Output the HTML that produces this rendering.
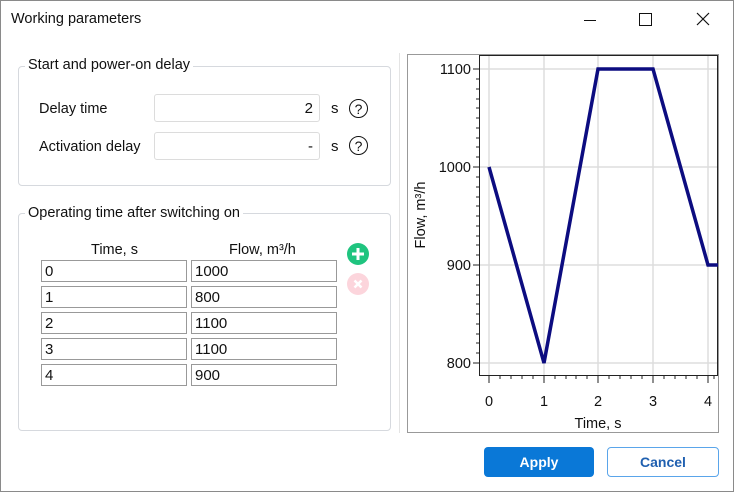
<html><head><style>
body{margin:0;width:734px;height:492px;overflow:hidden;font-family:"Liberation Sans",sans-serif;font-size:14px;color:#111;background:#fff}
.win{position:absolute;left:0;top:0;width:732px;height:490px;border:1px solid #8a8a8a;background:#fff}
.a{position:absolute}
.grp{position:absolute;border:1px solid #d6d9de;border-radius:4px}
.gt{position:absolute;background:#fff;padding:0 3px;font-size:14px}
.inp{position:absolute;border:1px solid #dcdcdc;border-radius:3px;background:#fff;box-sizing:border-box;text-align:right;padding-right:6px;line-height:27px;font-size:15px}
.cell{position:absolute;border:1px solid #999;box-sizing:border-box;height:22px;line-height:21px;padding-left:3px;font-size:15px}
.q{position:absolute;width:17px;height:17px;border:1.6px solid #111;border-radius:50%;text-align:center;font-size:14px;line-height:18px}
</style></head><body><div class="win">
<div class="a" style="left:10px;top:10px;font-size:14.5px">Working parameters</div>
<div class="a" style="left:583px;top:19px;width:12px;height:1px;background:#111"></div>
<div class="a" style="left:638px;top:12px;width:11px;height:11px;border:1px solid #111"></div>
<svg class="a" style="left:695px;top:11px" width="14" height="14"><path d="M1 1L13 13M13 1L1 13" stroke="#111" stroke-width="1.2"/></svg>
<div class="a" style="left:398px;top:52px;width:1px;height:380px;background:#e4e4e4"></div>

<div class="grp" style="left:17px;top:65px;width:371px;height:118px"></div>
<div class="gt" style="left:24px;top:56px;font-size:14.5px">Start and power-on delay</div>
<div class="a" style="left:38px;top:100px;font-size:14.5px">Delay time</div>
<div class="inp" style="left:153px;top:93px;width:166px;height:28px">2</div>
<div class="a" style="left:330px;top:99px;font-size:15px">s</div>
<div class="q" style="left:348px;top:98px">?</div>
<div class="a" style="left:38px;top:138px;font-size:14.5px">Activation delay</div>
<div class="inp" style="left:153px;top:131px;width:166px;height:28px">-</div>
<div class="a" style="left:330px;top:137px;font-size:15px">s</div>
<div class="q" style="left:348px;top:135px">?</div>

<div class="grp" style="left:17px;top:212px;width:371px;height:216px"></div>
<div class="gt" style="left:24px;top:204px;font-size:14.5px">Operating time after switching on</div>
<div class="a" style="left:90px;top:241px;font-size:14.5px">Time, s</div>
<div class="a" style="left:228px;top:241px;font-size:14.5px">Flow, m³/h</div>
<div class="cell" style="left:40px;top:259px;width:146px">0</div><div class="cell" style="left:190px;top:259px;width:146px">1000</div>
<div class="cell" style="left:40px;top:285px;width:146px">1</div><div class="cell" style="left:190px;top:285px;width:146px">800</div>
<div class="cell" style="left:40px;top:311px;width:146px">2</div><div class="cell" style="left:190px;top:311px;width:146px">1100</div>
<div class="cell" style="left:40px;top:337px;width:146px">3</div><div class="cell" style="left:190px;top:337px;width:146px">1100</div>
<div class="cell" style="left:40px;top:363px;width:146px">4</div><div class="cell" style="left:190px;top:363px;width:146px">900</div>
<svg class="a" style="left:345px;top:241px" width="26" height="54"><circle cx="12" cy="12" r="11" fill="#1fc47f"/><path d="M12 6V18M6 12H18" stroke="#fff" stroke-width="3"/><circle cx="12" cy="42" r="11" fill="#fcd5dc"/><path d="M8.5 38.5L15.5 45.5M15.5 38.5L8.5 45.5" stroke="#fff" stroke-width="2.5"/></svg>

<svg class="a" style="left:0;top:0" width="734" height="492" font-family="Liberation Sans" font-size="14">
<rect x="406.5" y="53.5" width="311" height="378" fill="none" stroke="#333" stroke-dasharray="1,1"/>
<g stroke="#ddd" stroke-width="1.5">
<line x1="488" y1="54" x2="488" y2="374"/><line x1="543" y1="54" x2="543" y2="374"/><line x1="597" y1="54" x2="597" y2="374"/><line x1="652" y1="54" x2="652" y2="374"/><line x1="707" y1="54" x2="707" y2="374"/>
<line x1="478" y1="68" x2="717" y2="68"/><line x1="478" y1="166" x2="717" y2="166"/><line x1="478" y1="264" x2="717" y2="264"/><line x1="478" y1="362" x2="717" y2="362"/>
</g>
<rect x="478.5" y="54.5" width="238" height="320" fill="none" stroke="#222"/>
<g stroke="#222">
<path d="M472 68H478M472 166H478M472 264H478M472 362H478"/>
<path d="M475 78H478M475 88H478M475 98H478M475 107H478M475 117H478M475 127H478M475 137H478M475 146H478M475 156H478M475 176H478M475 186H478M475 196H478M475 205H478M475 215H478M475 225H478M475 235H478M475 244H478M475 254H478M475 274H478M475 284H478M475 294H478M475 303H478M475 313H478M475 323H478M475 333H478M475 342H478M475 352H478"/>
<path d="M488 374V382M543 374V382M597 374V382M652 374V382M707 374V382"/>
<path d="M499 374V378M510 374V378M521 374V378M532 374V378M554 374V378M565 374V378M575 374V378M586 374V378M608 374V378M619 374V378M630 374V378M641 374V378M663 374V378M674 374V378M685 374V378M696 374V378M713 374V378"/>
</g>
<g fill="#111" text-anchor="end" font-size="14.5"><text x="470" y="73">1100</text><text x="470" y="171">1000</text><text x="470" y="269">900</text><text x="470" y="367">800</text></g>
<g fill="#111" text-anchor="middle" font-size="14.5"><text x="488" y="405">0</text><text x="543" y="405">1</text><text x="597" y="405">2</text><text x="652" y="405">3</text><text x="707" y="405">4</text><text x="597" y="427">Time, s</text></g>
<text transform="translate(424,214) rotate(-90)" text-anchor="middle" fill="#111" font-size="14.5">Flow, m³/h</text>
<polyline points="488,166 543,362 597,68 652,68 707,264 717,264" fill="none" stroke="#0c0c80" stroke-width="3.5"/>
</svg>

<div class="a" style="left:483px;top:446px;width:110px;height:30px;background:#0a78d7;border-radius:4px;color:#fff;font-weight:bold;text-align:center;line-height:30px">Apply</div>
<div class="a" style="left:606px;top:446px;width:110px;height:28px;border:1px solid #5aa5ea;border-radius:4px;color:#2060b0;font-weight:bold;text-align:center;line-height:28px">Cancel</div>
</div></body></html>
